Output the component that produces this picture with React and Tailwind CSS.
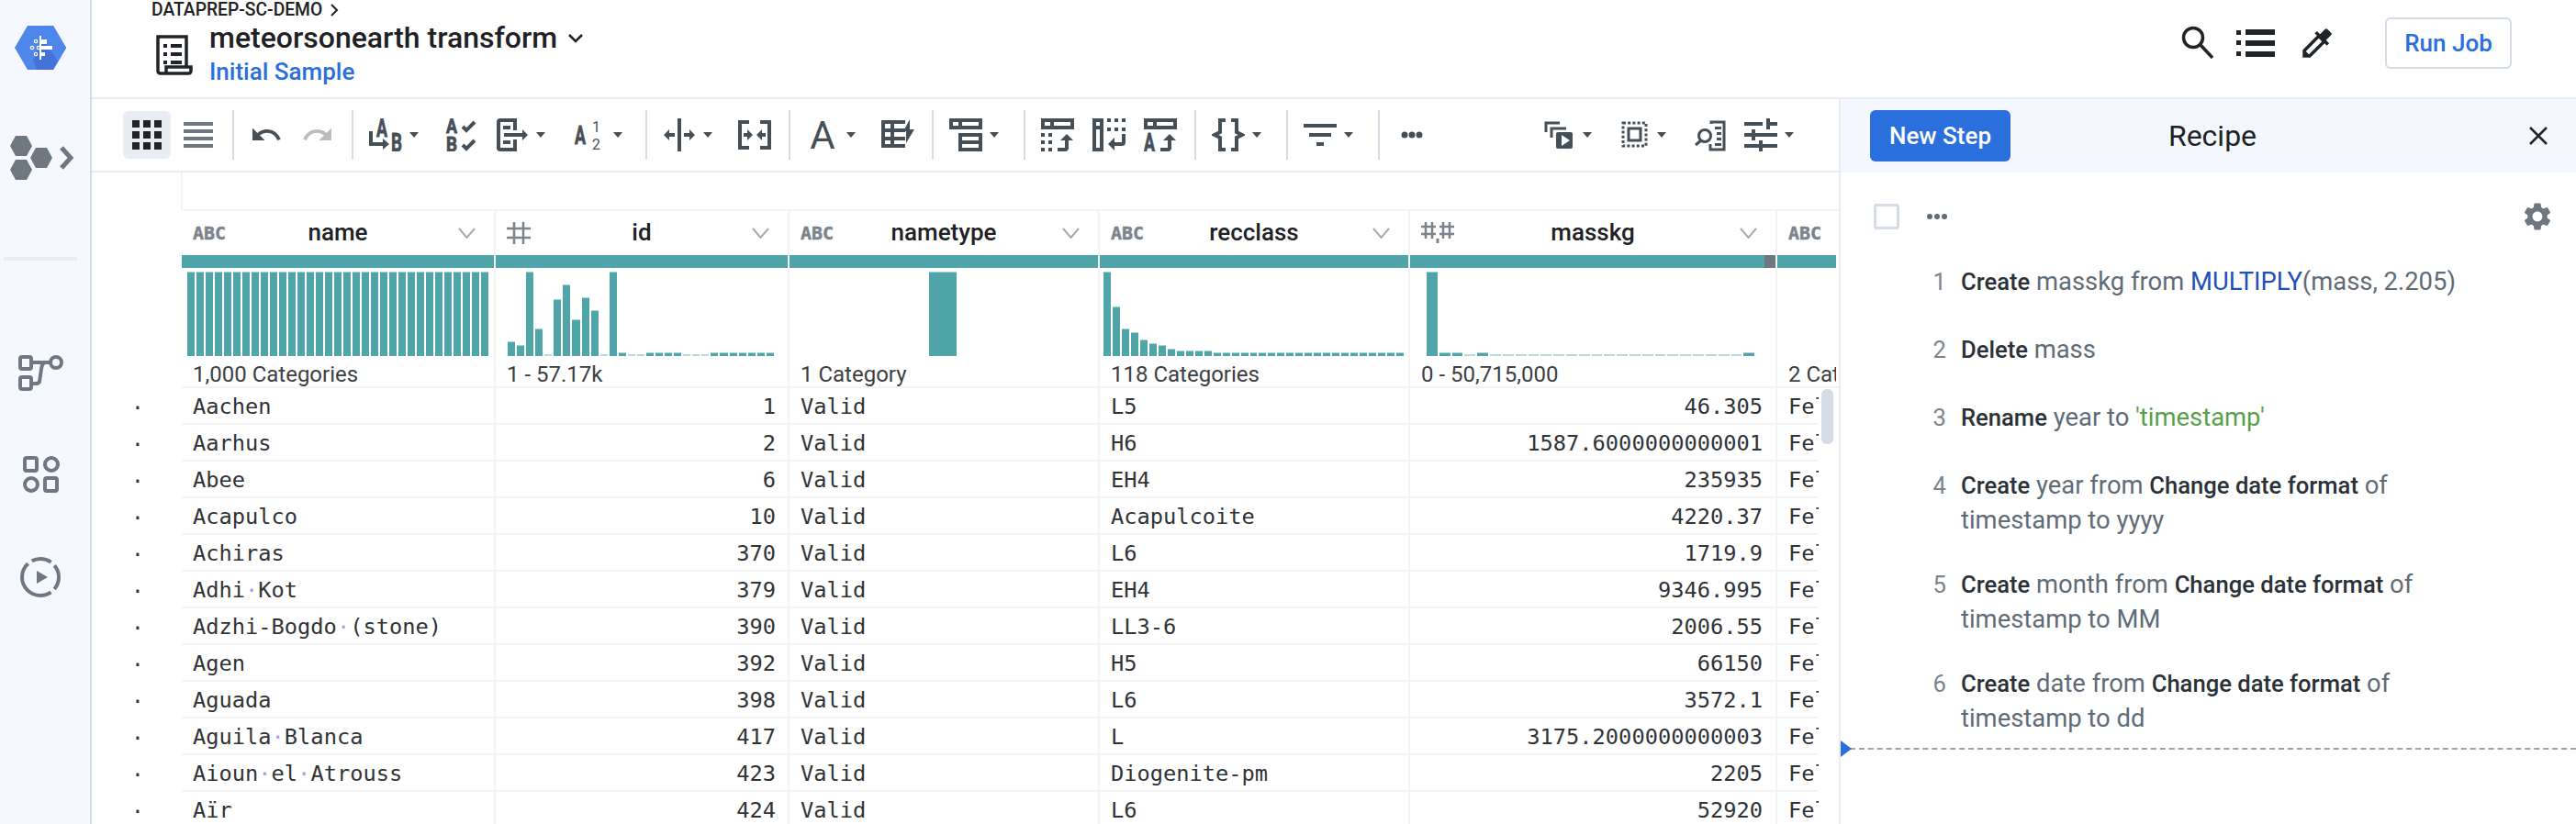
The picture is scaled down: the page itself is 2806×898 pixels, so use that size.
import React from 'react';

const ink = '#454f58';

// small toolbar svg, drawn on a 36 unit box
function I({ className = '', children }) {
  return (
    <svg width="36" height="36" viewBox="0 0 36 36" fill={ink} className={`shrink-0 ${className}`}>
      {children}
    </svg>
  );
}

function Caret({ className = '' }) {
  return (
    <svg width="10" height="6" viewBox="0 0 10 6" fill={ink} className={`shrink-0 ${className}`}>
      <path d="M0 0h10L5 6z" />
    </svg>
  );
}

function Sep({ className = '' }) {
  return <div className={`w-[2px] h-[54px] shrink-0 bg-[#d4dce6] ${className}`} />;
}

function Glyph({ x, y, size, w, children, weight = 700 }) {
  return (
    <text x={x} y={y} fontSize={size} fontWeight={weight} fontFamily="Roboto, sans-serif" textLength={w} lengthAdjust="spacingAndGlyphs" stroke={ink} strokeWidth={weight === 700 ? 0.8 : 0}>
      {children}
    </text>
  );
}

function TopBlock() {
  return (
    <path fillRule="evenodd" d="M0 0h36v12H0zM4 4v4h6V4zM14 4v4h18V4z" />
  );
}

function UpArrow() {
  return (
    <>
      <path d="M18 34h8q2 0 2-2V22" fill="none" stroke={ink} strokeWidth="4" />
      <path d="M28 17l7 7H21z" />
    </>
  );
}

function Toolbar() {
  return (
    <div className="h-[80px] flex items-center border-b-2 border-[#e8ecf3] shrink-0">
      <div className="ml-[34px] w-[52px] h-[52px] rounded-md bg-[#e8ecf3] flex items-center justify-center">
        <svg width="32" height="32" viewBox="0 0 32 32" fill="#202429">
          <path d="M0 0h8v8H0zM12 0h8v8h-8zM24 0h8v8h-8zM0 12h8v8H0zM12 12h8v8h-8zM24 12h8v8h-8zM0 24h8v8H0zM12 24h8v8h-8zM24 24h8v8h-8z" />
        </svg>
      </div>
      <I className="ml-[12px]">
        <path fill="#6f7880" d="M2 4h32v4H2zM2 12h32v4H2zM2 20h32v4H2zM2 28h32v4H2z" />
      </I>
      <Sep className="ml-[19px]" />
      <svg width="36" height="36" viewBox="0 0 24 24" fill={ink} className="ml-[17px] shrink-0">
        <path d="M12.5 8c-2.65 0-5.05.99-6.9 2.6L2 7v9h9l-3.62-3.62c1.39-1.16 3.16-1.88 5.12-1.88 3.54 0 6.55 2.31 7.6 5.5l2.37-.78C21.08 11.03 17.15 8 12.5 8z" />
      </svg>
      <svg width="36" height="36" viewBox="0 0 24 24" fill="#b9bdc0" className="ml-[20px] shrink-0">
        <path d="M18.4 10.6C16.55 8.99 14.15 8 11.5 8c-4.65 0-8.58 3.03-9.96 7.22L3.9 16c1.05-3.19 4.05-5.5 7.6-5.5 1.95 0 3.73.72 5.12 1.88L13 16h9V7l-3.6 3.6z" />
      </svg>
      <Sep className="ml-[19px]" />
      <I className="ml-[17px]">
        <Glyph x={8} y={20} size={27} w={12}>A</Glyph>
        <Glyph x={24} y={36} size={27} w={12}>B</Glyph>
        <path d="M2 14v14h14" fill="none" stroke={ink} strokeWidth="4" />
        <path d="M15 22l7 6-7 6z" />
      </I>
      <Caret className="ml-[8px]" />
      <I className="ml-[29px]">
        <Glyph x={1} y={16} size={22} w={12}>A</Glyph>
        <Glyph x={1} y={36} size={22} w={12}>B</Glyph>
        <path d="M19 9l4 4 9-9M19 29l4 4 9-9" fill="none" stroke={ink} strokeWidth="4" />
      </I>
      <I className="ml-[20px]">
        <path d="M20 13V2H4Q2 2 2 4v28q0 2 2 2h16V23" fill="none" stroke={ink} strokeWidth="4" />
        <path d="M7 8h8v4H7zM7 24h8v4H7zM8 16h20v4H8zM28 12l6 6-6 6z" />
      </I>
      <Caret className="ml-[7px]" />
      <I className="ml-[31px]">
        <Glyph x={1} y={28} size={27} w={12}>A</Glyph>
        <Glyph x={20} y={15} size={17} w={9} weight={400}>1</Glyph>
        <Glyph x={20} y={34} size={17} w={9} weight={400}>2</Glyph>
      </I>
      <Caret className="ml-[7px]" />
      <Sep className="ml-[25px]" />

      <I className="ml-[17px]">
        <path d="M16 0h4v36h-4zM1 18l6-6v4h6v4H7v4zM35 18l-6-6v4h-6v4h6v4z" />
      </I>
      <Caret className="ml-[8px]" />
      <I className="ml-[28px]">
        <path d="M12 4H2v28h10M24 4h10v28H24" fill="none" stroke={ink} strokeWidth="4" />
        <path d="M6 16h4v-4l6 6-6 6v-4H6zM30 16h-4v-4l-6 6 6 6v-4h4z" />
      </I>
      <Sep className="ml-[19px]" />

      <I className="ml-[17px]">
        <text x="18" y="33" fontSize="42" fontWeight="400" fontFamily="Roboto, sans-serif" textAnchor="middle">A</text>
      </I>
      <Caret className="ml-[8px]" />
      <I className="ml-[28px]">
        <path d="M26 4H2v26h24M2 13h24M2 22h24M12 4v26" fill="none" stroke={ink} strokeWidth="4" />
        <path d="M31 1l-7 13h3v13l9-15h-5z" />
      </I>
      <Sep className="ml-[19px]" />

      <I className="ml-[17px]">
        <TopBlock />
        <path fillRule="evenodd" d="M10 16h26v20H10zM14 20v4h18v-4zM14 28v4h18v-4z" />
      </I>
      <Caret className="ml-[8px]" />
      <Sep className="ml-[27px]" />

      <I className="ml-[17px]">
        <TopBlock />
        <path d="M0 16h4v4H0zM8 16h4v4H8zM0 24h4v4H0zM8 24h4v4H8zM0 32h4v4H0zM8 32h4v4H8z" />
        <UpArrow />
      </I>
      <I className="ml-[20px]">
        <path fillRule="evenodd" d="M0 0h12v36H0zM4 4v4h4V4zM4 12v20h4V12z" />
        <path d="M16 0h4v4h-4zM24 0h4v4h-4zM32 0h4v4h-4zM16 10h4v4h-4zM24 10h4v4h-4zM32 10h4v4h-4z" />
        <path d="M34 17v9q0 2-2 2h-9" fill="none" stroke={ink} strokeWidth="4" />
        <path d="M17 28l7-7v14z" />
      </I>
      <I className="ml-[20px]">
        <TopBlock />
        <Glyph x={0} y={36} size={27} w={12}>A</Glyph>
        <UpArrow />
      </I>
      <Sep className="ml-[19px]" />

      <I className="ml-[17px]">
        <path d="M15 2H9v13l-6 3 6 3v13h6M21 2h6v13l6 3-6 3v13h-6" fill="none" stroke={ink} strokeWidth="4" />
      </I>
      <Caret className="ml-[8px]" />
      <Sep className="ml-[27px]" />

      <I className="ml-[17px]">
        <path d="M0 6h36v4H0zM6 16h24v4H6zM14 26h8v4h-8z" />
      </I>
      <Caret className="ml-[8px]" />
      <Sep className="ml-[27px]" />

      <I className="ml-[17px]">
        <circle cx="10" cy="18" r="3.5" />
        <circle cx="18" cy="18" r="3.5" />
        <circle cx="26" cy="18" r="3.5" />
      </I>

      <I className="ml-auto">
        <path d="M4 15V5h15M10 21V11h16" fill="none" stroke={ink} strokeWidth="3" />
        <path fillRule="evenodd" d="M17 15h14q2 0 2 2v14q0 2-2 2H17q-2 0-2-2V17q0-2 2-2zM21 18v12l9-6z" />
      </I>
      <Caret className="ml-[8px]" />
      <I className="ml-[28px]">
        <rect x="6" y="5" width="25" height="25" fill="none" stroke={ink} strokeWidth="3" strokeDasharray="3 2.2" />
        <rect x="12" y="11" width="13" height="13" fill="none" stroke={ink} strokeWidth="3" />
      </I>
      <Caret className="ml-[7px]" />
      <I className="ml-[29px]">
        <path d="M20 6V4h14v30H19v-6" fill="none" stroke={ink} strokeWidth="3" />
        <path d="M24 9h7v3h-7zM26 15h5v3h-5zM26 21h5v3h-5zM24 27h7v3h-7z" />
        <circle cx="13" cy="19" r="6.5" fill="none" stroke={ink} strokeWidth="3" />
        <path d="M9 24l-6 5" stroke={ink} strokeWidth="3" />
      </I>
      <I className="ml-[20px]">
        <path d="M0 4h20v4H0zM24 0h4v12h-4zM28 4h8v4h-8zM0 16h8v4H0zM8 12h4v12H8zM12 16h24v4H12zM0 28h16v4H0zM16 24h4v12h-4zM20 28h16v4H20z" />
      </I>
      <Caret className="ml-[8px] mr-[49px]" />
    </div>
  );
}

function Sidebar() {
  return (
    <div className="w-[100px] shrink-0 h-full bg-[#f5f8fe] border-r-2 border-[#d4dce6] flex flex-col">
      <svg width="56" height="50" viewBox="0 0 56 50" className="ml-[16px] mt-[27px] shrink-0">
        <path d="M14 1h28l14 24-14 24H14L0 25z" fill="#4f86ec" strokeLinejoin="round" />
        <path d="M30 14l26 11-14 24H24l-4-10z" fill="#4373d8" />
        <path d="M14 1h28l14 24-9 15-17-26-10 24z" fill="#4f86ec" />
        <g fill="#fff">
          <path d="M27 12h2v26h-2zM29 16h6v5h-6zM29 23h12v4H29zM29 30h4v4h-4z" />
        </g>
        <g fill="none" stroke="#fff" strokeWidth="1.2">
          <circle cx="23" cy="18" r="1.7" />
          <circle cx="19" cy="25" r="1.7" />
          <circle cx="26" cy="25" r="1.7" />
          <circle cx="23" cy="32" r="1.7" />
        </g>
      </svg>
      <svg width="70" height="48" viewBox="0 0 70 48" fill="#6f7880" className="ml-[11px] mt-[71px] shrink-0">
        <path d="M6 0h12l6 11-6 11H6L0 11zM28 13h12l6 11-6 11H28l-6-11zM6 26h12l6 11-6 11H6L0 37z" />
        <path d="M56 13l10 11-10 11" fill="none" stroke="#6f7880" strokeWidth="5" />
      </svg>
      <div className="w-[80px] h-[4px] ml-[4px] mt-[84px] bg-[#e8ecf3]" />
      <svg width="50" height="40" viewBox="0 0 50 40" fill="none" stroke="#6f7880" strokeWidth="4" className="ml-[20px] mt-[102px] shrink-0">
        <rect x="2" y="3" width="12" height="13" rx="2" />
        <rect x="2" y="25" width="12" height="13" rx="2" />
        <circle cx="41" cy="9" r="6" />
        <path d="M14 9h21M30 9q-4 0-5 7l-2 14q-1 2-4 2h-5" />
      </svg>
      <svg width="40" height="40" viewBox="0 0 40 40" fill="none" stroke="#6f7880" strokeWidth="4" className="ml-[25px] mt-[71px] shrink-0">
        <rect x="2" y="2" width="13" height="14" rx="2" />
        <circle cx="31" cy="9" r="7" />
        <circle cx="9" cy="31" r="7" />
        <rect x="24" y="24" width="13" height="14" rx="2" />
      </svg>
      <svg width="46" height="46" viewBox="0 0 46 46" className="ml-[21px] mt-[69px] shrink-0">
        <circle cx="23" cy="23" r="20" fill="none" stroke="#6f7880" strokeWidth="4" strokeDasharray="14 5 60 5 22 5" />
        <path d="M19 16l12 7-12 7z" fill="#6f7880" />
      </svg>
    </div>
  );
}

function Header() {
  return (
    <div className="h-[108px] shrink-0 border-b-2 border-[#e8ecf3] flex items-start relative">
      <svg width="40" height="44" viewBox="0 0 40 44" fill="none" stroke="#202429" strokeWidth="3.5" className="ml-[70px] mt-[38px] shrink-0">
        <path d="M33 36V2H2v37q0 3 3 3h30q3 0 3-3v-4H11v7" />
        <path d="M8 12h4M8 21h4M8 30h4M16 12h12M16 21h12M16 30h12" strokeWidth="4" />
      </svg>
      <div className="ml-[18px] flex flex-col">
        <div className="absolute left-[65px] top-0 h-[22px] flex items-center gap-[8px] text-[19.3px] text-[#202124] font-medium leading-none">
          DATAPREP-SC-DEMO
          <svg width="10" height="14" viewBox="0 0 10 14" fill="none" stroke="#202124" strokeWidth="2"><path d="M2 1l6 6-6 6" /></svg>
        </div>
        <div className="mt-[21px] h-[40px] flex items-center text-[32px] font-medium text-[#202124] leading-none">
          meteorsonearth transform
          <svg width="18" height="11" viewBox="0 0 18 11" fill="none" stroke="#202124" strokeWidth="2.5" className="ml-[11px]"><path d="M2 2l7 7 7-7" /></svg>
        </div>
        <div className="mt-[1px] text-[26px] font-medium text-[#2a6fdb] leading-[32px]">Initial Sample</div>
      </div>
      <div className="ml-auto flex items-center h-full pb-[12px]">
        <svg width="36" height="36" viewBox="0 0 36 36" fill="none" stroke="#202429" strokeWidth="3.5" className="mb-[2px]">
          <circle cx="13" cy="13" r="10.5" />
          <path d="M21 21l13 14" />
        </svg>
        <svg width="42" height="30" viewBox="0 0 42 30" fill="#202429" className="ml-[24px]">
          <path d="M0 1h5v5H0zM10 0h32v6H10zM0 12h5v5H0zM10 12h32v6H10zM0 24h5v5H0zM10 24h32v6H10z" />
        </svg>
        <svg width="42" height="42" viewBox="0 0 24 24" fill="#202429" className="ml-[25px]">
          <path d="M20.71 5.63l-2.34-2.34c-.39-.39-1.02-.39-1.41 0l-3.12 3.12-1.93-1.91-1.41 1.41 1.42 1.42L3 16.25V21h4.75l8.92-8.92 1.42 1.42 1.41-1.41-1.92-1.92 3.12-3.12c.4-.4.4-1.03.01-1.42zM6.92 19L5 17.08l8.06-8.06 1.92 1.92L6.92 19z" />
        </svg>
        <div className="ml-[53px] mr-[70px] w-[138px] h-[56px] rounded-md border-2 border-[#d4dce6] flex items-center justify-center text-[26px] font-medium text-[#2a6fdb]">
          Run Job
        </div>
      </div>
    </div>
  );
}

function TypeIcon({ kind }) {
  if (kind === 'abc') {
    return (
      <svg width="36" height="18" viewBox="0 0 36 18" fill="#7b848c" stroke="#7b848c" strokeWidth="0.5" className="shrink-0">
        <text x="0" y="16" fontSize="20" fontWeight="700" fontFamily="'DejaVu Sans Mono', monospace" textLength="36" lengthAdjust="spacingAndGlyphs">ABC</text>
      </svg>
    );
  }
  if (kind === 'int') {
    return (
      <svg width="26" height="24" viewBox="0 0 26 24" fill="none" stroke="#7b848c" strokeWidth="2.5" className="shrink-0">
        <path d="M8 0v24M18 0v24M0 7h26M0 17h26" />
      </svg>
    );
  }
  return (
    <svg width="36" height="24" viewBox="0 0 36 24" fill="none" stroke="#7b848c" strokeWidth="2.5" className="shrink-0">
      <path d="M5 0v18M12 0v18M0 5h16M0 13h16M24 0v18M31 0v18M20 5h16M20 13h16" />
      <path d="M18 18v5" strokeWidth="3" />
    </svg>
  );
}

function Hist({ bars, className }) {
  return (
    <div className={`h-[92px] flex items-end ${className}`}>
      {bars.map((h, i) => (
        <div
          key={i}
          className={h === 2 ? 'flex-1 bg-[#b5dcdc]' : 'flex-1 bg-[#4fa5a8] border-t border-[#a5d3d3]'}
          style={{ height: h }}
        />
      ))}
    </div>
  );
}

const idBars = [16, 12, 92, 30, 2, 62, 78, 40, 64, 50, 2, 92, 4, 2, 2, 4, 4, 4, 4, 2, 2, 2, 4, 4, 4, 4, 4, 4, 4];
const classBars = [92, 54, 30, 26, 18, 14, 12, 8, 6, 6, 6, 6, 4, 4, 4, 4, 4, 4, 4, 4, 4, 4, 4, 4, 4, 4, 4, 4, 4, 4, 4, 4, 4];
const massBars = [92, 4, 4, 2, 4, 2, 2, 2, 2, 2, 2, 2, 2, 2, 2, 2, 2, 2, 2, 2, 2, 2, 2, 2, 2, 4];

function HeadCell({ type, name, label, hist, gray }) {
  return (
    <div className="border-r-2 border-[#f3f4f6] flex flex-col">
      <div className="h-[48px] grid grid-cols-[1fr_auto_1fr] items-center px-[12px]">
        <TypeIcon kind={type} />
        <div className="text-[26px] font-medium text-[#202124] leading-none pb-[2px]">{name}</div>
        <svg width="19" height="12" viewBox="0 0 19 12" fill="none" stroke="#a0aab5" strokeWidth="2" className="justify-self-end mr-[8px]">
          <path d="M1 1l8.5 10L18 1" />
        </svg>
      </div>
      <div className="h-[14px] bg-[#4fa5a8] flex justify-end">
        {gray && <div className="w-[12px] bg-[#6f7880]" />}
      </div>
      <div className="mt-[4px]">{hist}</div>
      <div className="h-[33px] pl-[12px] pt-[6px] flex items-center text-[24px] text-[#3c4043] leading-none whitespace-nowrap">{label}</div>
    </div>
  );
}

const rows = [
  ['Aachen', '1', 'L5', '46.305'],
  ['Aarhus', '2', 'H6', '1587.6000000000001'],
  ['Abee', '6', 'EH4', '235935'],
  ['Acapulco', '10', 'Acapulcoite', '4220.37'],
  ['Achiras', '370', 'L6', '1719.9'],
  ['Adhi Kot', '379', 'EH4', '9346.995'],
  ['Adzhi-Bogdo (stone)', '390', 'LL3-6', '2006.55'],
  ['Agen', '392', 'H5', '66150'],
  ['Aguada', '398', 'L6', '3572.1'],
  ['Aguila Blanca', '417', 'L', '3175.2000000000003'],
  ['Aioun el Atrouss', '423', 'Diogenite-pm', '2205'],
  ['Aïr', '424', 'L6', '52920'],
];

// spaces are shown as little violet dots in the data grid
function Spaced({ text }) {
  const parts = text.split(' ');
  return parts.map((p, i) => (
    <React.Fragment key={i}>
      {i > 0 && <span className="text-[#b49ae0]">·</span>}
      {p}
    </React.Fragment>
  ));
}

function Grid() {
  return (
    <div className="flex-1 min-h-0 overflow-hidden">
      <div className="h-[40px] ml-[97px] border-l-2 border-[#f3f4f6]" />
      <div className="ml-[98px] border-t-2 border-[#f3f4f6]">
        <div className="grid grid-cols-[342px_320px_338px_338px_400px_66px] border-b-2 border-[#f3f4f6] overflow-hidden">
          <HeadCell type="abc" name="name" label="1,000 Categories" hist={
            <Hist className="mx-[6px] gap-[2px]" bars={Array(33).fill(92)} />
          } />
          <HeadCell type="int" name="id" label="1 - 57.17k" hist={
            <Hist className="ml-[13px] mr-[15px] gap-[2px]" bars={idBars} />
          } />
          <HeadCell type="abc" name="nametype" label="1 Category" hist={
            <Hist className="ml-[152px] w-[30px]" bars={[92]} />
          } />
          <HeadCell type="abc" name="recclass" label="118 Categories" hist={
            <Hist className="ml-[4px] mr-[5px] gap-[2px]" bars={classBars} />
          } />
          <HeadCell type="dec" name="masskg" label="0 - 50,715,000" gray hist={
            <Hist className="ml-[18px] mr-[23px] gap-[2px]" bars={massBars} />
          } />
          <div className="flex flex-col w-[64px] overflow-hidden">
            <div className="h-[48px] flex items-center pl-[12px]"><TypeIcon kind="abc" /></div>
            <div className="h-[14px] bg-[#4fa5a8]" />
            <div className="h-[96px]" />
            <div className="h-[33px] pl-[12px] pt-[6px] flex items-center text-[24px] text-[#3c4043] leading-none whitespace-nowrap">2 Categories</div>
          </div>
        </div>
      </div>
      {rows.map((r) => (
        <div key={r[0]} className="flex h-[40px] text-[23.7px] leading-none text-[#2f3337] font-['DejaVu_Sans_Mono',monospace]">
          <div className="w-[98px] flex items-center justify-center pl-[2px] pt-[3px]">·</div>
          <div className="grid grid-cols-[342px_320px_338px_338px_400px_45px] border-b-2 border-[#f3f4f6] items-stretch">
            <div className="border-r-2 border-[#f3f4f6] pl-[12px] pt-[3px] flex items-center whitespace-nowrap"><Spaced text={r[0]} /></div>
            <div className="border-r-2 border-[#f3f4f6] pr-[13px] pt-[3px] flex items-center justify-end">{r[1]}</div>
            <div className="border-r-2 border-[#f3f4f6] pl-[12px] pt-[3px] flex items-center">Valid</div>
            <div className="border-r-2 border-[#f3f4f6] pl-[12px] pt-[3px] flex items-center">{r[2]}</div>
            <div className="border-r-2 border-[#f3f4f6] pr-[14px] pt-[3px] flex items-center justify-end">{r[3]}</div>
            <div className="pl-[12px] pt-[3px] flex items-center overflow-hidden">Fell</div>
          </div>
        </div>
      ))}
    </div>
  );
}

function Step({ n, children }) {
  return (
    <div className="flex min-h-[43px]">
      <div className="w-[115px] shrink-0 text-right text-[25.6px] text-[#7a848d]">{n}</div>
      <div className="ml-[16px] w-[580px] text-[27.4px] text-[#5f6b76]">{children}</div>
    </div>
  );
}

const B = ({ children }) => <span className="font-medium text-[25.6px] text-[#2b3138]">{children}</span>;

function Recipe() {
  return (
    <div className="w-[803px] shrink-0 border-l-2 border-[#e8ecf3] flex flex-col">
      <div className="h-[80px] shrink-0 bg-[#f4f7fd] flex items-center pl-[32px] pr-[30px]">
        <div className="w-[153px] h-[56px] rounded-md bg-[#2a6fdb] text-white text-[26px] font-medium flex items-center justify-center">New Step</div>
        <div className="flex-1 text-center text-[32px] text-[#202124] pr-[124px]">Recipe</div>
        <svg width="22" height="22" viewBox="0 0 22 22" fill="none" stroke="#202429" strokeWidth="2.5"><path d="M2 2l18 18M20 2L2 20" /></svg>
      </div>
      <div className="flex items-center h-[34px] mt-[31px] pl-[36px] pr-[24px] shrink-0">
        <div className="w-[28px] h-[28px] rounded-[3px] border-[3px] border-[#d4dce6]" />
        <svg width="24" height="8" viewBox="0 0 24 8" fill="#5f6b76" className="ml-[29px]">
          <circle cx="4" cy="4" r="3" /><circle cx="12" cy="4" r="3" /><circle cx="20" cy="4" r="3" />
        </svg>
        <svg width="36" height="36" viewBox="0 0 24 24" fill="#6f7880" className="ml-auto">
          <path d="M19.14 12.94c.04-.3.06-.61.06-.94 0-.32-.02-.64-.07-.94l2.03-1.58c.18-.14.23-.41.12-.61l-1.92-3.32c-.12-.22-.37-.29-.59-.22l-2.39.96c-.5-.38-1.03-.7-1.62-.94l-.36-2.54c-.04-.24-.24-.41-.48-.41h-3.84c-.24 0-.43.17-.47.41l-.36 2.54c-.59.24-1.13.57-1.62.94l-2.39-.96c-.22-.08-.47 0-.59.22L2.74 8.87c-.12.21-.08.47.12.61l2.03 1.58c-.05.3-.09.63-.09.94s.02.64.07.94l-2.03 1.58c-.18.14-.23.41-.12.61l1.92 3.32c.12.22.37.29.59.22l2.39-.96c.5.38 1.03.7 1.62.94l.36 2.54c.05.24.24.41.48.41h3.84c.24 0 .44-.17.47-.41l.36-2.54c.59-.24 1.13-.56 1.62-.94l2.39.96c.22.08.47 0 .59-.22l1.92-3.32c.12-.22.07-.47-.12-.61l-2.01-1.58zM12 15.6c-1.98 0-3.6-1.62-3.6-3.6s1.62-3.6 3.6-3.6 3.6 1.62 3.6 3.6-1.62 3.6-3.6 3.6z" />
        </svg>
      </div>
      <div className="mt-[35px] flex flex-col gap-[31px] leading-[38.4px]">
        <Step n="1"><B>Create</B> masskg from <span className="text-[#1e50b8]">MULTIPLY</span>(mass, 2.205)</Step>
        <Step n="2"><B>Delete</B> mass</Step>
        <Step n="3"><B>Rename</B> year to <span className="text-[#57a049]">'timestamp'</span></Step>
        <Step n="4"><B>Create</B> year from <B>Change date format</B> of timestamp to yyyy</Step>
        <Step n="5"><B>Create</B> month from <B>Change date format</B> of timestamp to MM</Step>
        <Step n="6"><B>Create</B> date from <B>Change date format</B> of timestamp to dd</Step>
      </div>
      <div className="relative mt-[13px] border-t-2 border-dashed border-[#9aa3ab]">
        <svg width="12" height="18" viewBox="0 0 12 18" fill="#2a6fdb" className="absolute left-0 top-[-10px]"><path d="M0 0l12 9-12 9z" /></svg>
      </div>
    </div>
  );
}

export default function App() {
  return (
    <div className="w-[2806px] h-[898px] overflow-hidden flex bg-white font-['Roboto',sans-serif]">
      <Sidebar />
      <div className="flex-1 min-w-0 flex flex-col">
        <Header />
        <div className="flex-1 min-h-0 flex">
          <div className="w-[1903px] shrink-0 flex flex-col relative">
            <Toolbar />
            <Grid />
            <div className="absolute left-[1884px] top-[316px] w-[13px] h-[60px] rounded-md bg-[#d4dce6]" />
          </div>
          <Recipe />
        </div>
      </div>
    </div>
  );
}
